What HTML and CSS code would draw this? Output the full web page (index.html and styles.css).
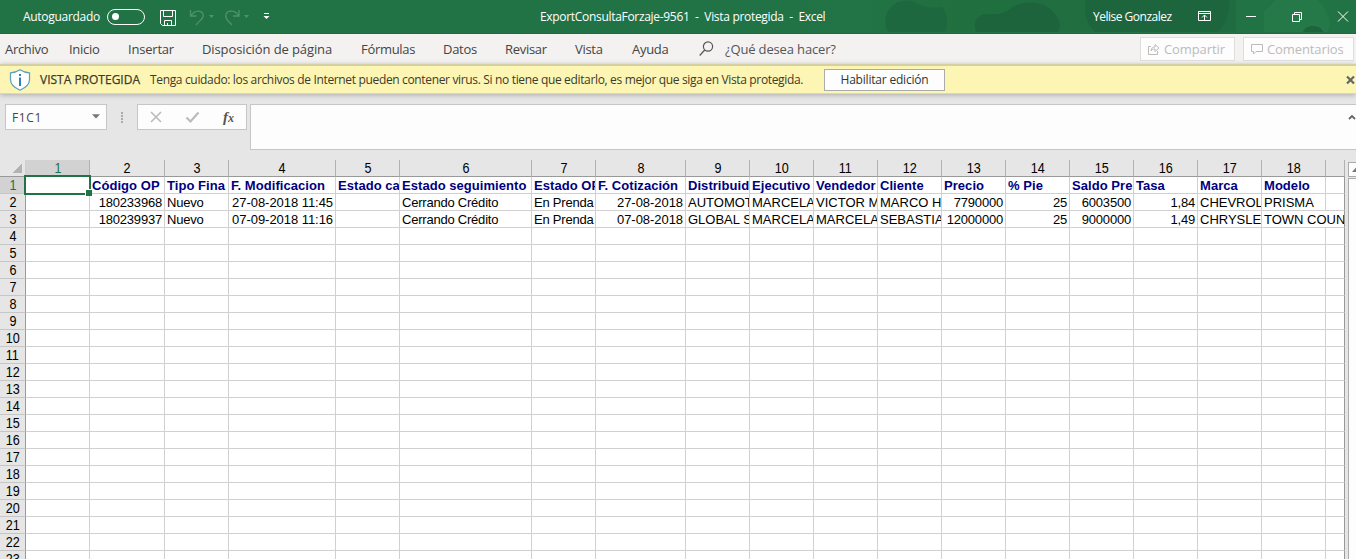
FILE: index.html
```html
<!DOCTYPE html>
<html lang="es">
<head>
<meta charset="utf-8">
<title>ExportConsultaForzaje-9561 - Excel</title>
<link rel="stylesheet" href="styles.css">
</head>
<body>
<div class="app">
  <header class="titlebar">
    <svg class="title-art" width="560" height="32" viewBox="0 0 560 32">
      <defs><linearGradient id="fade"><stop offset="0" stop-color="#247549" stop-opacity="0"/><stop offset=".3" stop-color="#21703f"/><stop offset="1" stop-color="#206c42"/></linearGradient></defs>
      <rect width="440" height="32" fill="url(#fade)"/>
      <path d="M92 32a21 21 0 0 1 28-29c8 5 18 5 26 4 6 6 6 18 3 25z" fill="#1e683f"/>
      <path d="M180 32c-3-10 0-17 10-18 10 1 17 0 23-4 8-9 32-11 42 0 8 7 11 15 7 22z" fill="#1d643c"/>
      <path d="M290 0h144c-1 13-4 24-12 32H299c-9-9-12-20-9-32z" fill="#1d653d"/>
      <path d="M468 32V12L480 0h42c9 10 14 20 10 32z" fill="#257949"/>
      <path d="M507 32c2-8 18-8 20 0z" fill="#1c643b"/>
    </svg>
    <span class="autosave">Autoguardado</span>
    <span class="toggle"><i></i></span>
    <svg class="ico save" width="16" height="17" viewBox="0 0 16 17"><path d="M.5.5h15v15h-13l-2-2zM3.500.5v6h9v-6M4.500 15.500v-5h7v5M7.500 13v2" fill="none" stroke="#fff"/></svg>
    <svg class="ico undo" width="80" height="18" viewBox="0 0 80 18"><g fill="none" stroke="#4e9269" stroke-width="1.300"><path d="M1.500 1v6h6M2 6.500C6 1 12 1 14 5c1.500 4-3 6-7 11"/><path d="M50 1v6h-6M49.500 6.500C46 1 39 1 37 5c-1.500 4 2 7 6 11"/></g><path d="M20 6h5l-2.500 3zM55 6h5l-2.500 3z" fill="#4e9269"/></svg>
    <svg class="ico more" width="7" height="7" viewBox="0 0 7 7"><path d="M1 0h5v1H1zM.5 3h6l-3 3z" fill="#fff"/></svg>
    <span class="doc">ExportConsultaForzaje-9561&nbsp; -&nbsp; Vista protegida&nbsp; -&nbsp; Excel</span>
    <span class="user">Yelise Gonzalez</span>
    <svg class="ico winbtns" width="152" height="14" viewBox="0 0 152 14"><g fill="none" stroke="#fff"><path d="M.5 1.500h12v9H.5zM.5 3.500h12M6.500 10V5M4 7.500l2.500-2.500L9 7.500M48 6.500h10M94.500 4.500h7v7h-7zM96.500 4V2.500h7v7H102M140 1.500l10 10M150 1.500l-10 10"/></g></svg>
  </header>

  <nav class="tabs">
    <span>Archivo</span><span>Inicio</span><span class="insert">Insertar</span><span class="wide">Disposición de página</span><span>Fórmulas</span><span>Datos</span><span>Revisar</span><span>Vista</span><span>Ayuda</span>
    <svg width="15" height="16" viewBox="0 0 15 16"><g fill="none" stroke="#555" stroke-width="1.200"><circle cx="9" cy="5.500" r="4.600"/><path d="M5.700 9L.7 14.500"/></g></svg>
    <span class="ask">¿Qué desea hacer?</span>
    <div class="share"><svg width="12" height="12" viewBox="0 0 12 12"><path d="M3 3.500H.5v8h9V8M3 8c0-3 2-4 4-4V1.500l4 3.500-4 3.500V6C5 6 4 6.500 3 8z" fill="none" stroke="#bbb"/></svg><b>Compartir</b></div>
    <div class="share comments"><svg width="12" height="12" viewBox="0 0 12 12"><path d="M.5 1.500h11v7H5L2.500 11V8.500h-2z" fill="none" stroke="#bbb"/></svg><b>Comentarios</b></div>
  </nav>

  <section class="notice">
    <svg width="22" height="22" viewBox="0 0 22 22"><path d="M11 .8c3 2 6 3 9.500 3v7c0 5-4 8-9.500 10.400C5.500 18.800 1.500 15.800 1.500 10.800v-7c3.500 0 6.500-1 9.500-3z" fill="#fff" stroke="#5a9fbd" stroke-width="1.200"/><path d="M10 5h2v2h-2zM10 8.500h2V17h-2z" fill="#2d83b5"/></svg>
    <strong>VISTA PROTEGIDA</strong>
    <span class="msg">Tenga cuidado: los archivos de Internet pueden contener virus. Si no tiene que editarlo, es mejor que siga en Vista protegida.</span>
    <button><span>Habilitar edición</span></button>
    <svg class="dismiss" width="9" height="8" viewBox="0 0 9 8"><path d="M1 .5l7 7M8 .5l-7 7" stroke="#666" stroke-width="2.200"/></svg>
  </section>

  <section class="formula">
    <div class="namebox"><span>F1C1</span><svg width="8" height="5" viewBox="0 0 8 5"><path d="M0 .3h8L4 4.500z" fill="#777"/></svg></div>
    <div class="dots"><i></i><i></i><i></i><i></i></div>
    <div class="fxbox">
      <svg width="82" height="14" viewBox="0 0 82 14"><path d="M1 2l10 10M11 2L1 12" stroke="#bbb" stroke-width="1.600"/><path d="M36.500 7.500l4 4 8-9" fill="none" stroke="#bbb" stroke-width="2.200"/></svg>
      <em>f<small>x</small></em>
    </div>
    <div class="input"><svg width="8" height="6" viewBox="0 0 8 6"><path d="M1 5l3-3 3 3" fill="none" stroke="#666" stroke-width="1.800"/></svg></div>
  </section>

  <main class="sheet">
    <div class="grid" id="grid"></div>
    <div class="scroll"><div class="up"><svg width="8" height="5" viewBox="0 0 8 5"><path d="M0 5l4-4.500L8 5z" fill="#777"/></svg></div><div class="track"></div></div>
  </main>
</div>
<script src="grid.js"></script>
</body>
</html>
```
FILE: grid.js
```js
const rows = [
  ["", "Código OP", "Tipo Fina", "F. Modificacion", "Estado ca", "Estado seguimiento", "Estado OP", "F. Cotización", "Distribuid", "Ejecutivo", "Vendedor", "Cliente", "Precio", "% Pie", "Saldo Pre", "Tasa", "Marca", "Modelo", ""],
  ["", "180233968", "Nuevo", "27-08-2018 11:45", "", "Cerrando Crédito", "En Prenda", "27-08-2018", "AUTOMOT", "MARCELA", "VICTOR M", "MARCO H", "7790000", "25", "6003500", "1,84", "CHEVROL", "PRISMA", ""],
  ["", "180239937", "Nuevo", "07-09-2018 11:16", "", "Cerrando Crédito", "En Prenda", "07-08-2018", "GLOBAL S", "MARCELA", "MARCELA", "SEBASTIA", "12000000", "25", "9000000", "1,49", "CHRYSLE", "TOWN COUN"]
];
const grid = document.getElementById("grid");
function add(cls, text) {
  const cell = document.createElement("div");
  cell.className = cls;
  if (text) {
    const s = document.createElement("span");
    s.textContent = text;
    cell.append(s);
  }
  grid.append(cell);
}
add("corner", "");
for (let c = 1; c <= 19; c++) add("colhead" + (c === 1 ? " active" : ""), c < 19 ? String(c) : "");
for (let r = 1; r <= 23; r++) {
  add("rowhead" + (r === 1 ? " active" : ""), String(r));
  const data = rows[r - 1] || [];
  for (let c = 0; c < 19; c++) {
    if (r === 3 && c === 18) continue;
    const text = data[c] || "";
    let cls = "cell";
    if (r === 1) cls += " head";
    else if (/^\d+-/.test(text)) cls += " num date";
    else if (/^[\d,]+$/.test(text)) cls += " num";
    else if (/[a-z]/.test(text)) cls += " mixed";
    if (r === 1 && c === 0) cls += " selected";
    if (r === 3 && c === 17) cls += " span2";
    if (c === 18) cls += " last";
    add(cls, text);
  }
}
```
FILE: styles.css
```css
* { box-sizing: border-box; }
body { margin: 0; overflow: hidden; background: #e6e6e6; }
.app { width: 1356px; height: 559px; overflow: hidden; display: flex; flex-direction: column; font-family: "Open Sans", "Noto Sans", sans-serif; font-size: 12px; color: #444; white-space: nowrap; }
svg { display: block; flex: none; }

.titlebar { position: relative; height: 34px; flex: none; background: #217346; color: #fff; display: grid; grid-template-columns: 84px 53px 29px 74px 277px 553px 105px 1fr; padding-left: 23px; align-items: center; border-bottom: 1px solid #1e6b40; }
.titlebar > * { position: relative; }
.titlebar .title-art { position: absolute; right: 0; top: 0; }
.autosave { letter-spacing: -0.3px; }
.toggle { width: 38px; height: 16px; border: 1px solid #fff; border-radius: 8px; display: flex; align-items: center; padding-left: 4px; }
.toggle i { width: 7px; height: 7px; border-radius: 50%; background: #fff; }
.save { margin-top: 3px; }
.undo { margin-top: 2px; }
.doc { letter-spacing: -0.31px; }
.user { letter-spacing: -0.5px; }

.tabs { height: 30px; flex: none; background: #f3f2f1; display: grid; grid-template-columns: 64px 59px 74px 159px 82px 62px 70px 57px 67px 26px 415px 103px 104px; padding-left: 5px; align-items: center; font-size: 13px; letter-spacing: -0.3px; }
.tabs .wide { letter-spacing: -0.1px; }
.tabs .insert { letter-spacing: -0.2px; }
.tabs .ask { color: #555; letter-spacing: -0.15px; }
.share { height: 24px; width: 95px; border: 1px solid #dedede; background: #fdfdfd; color: #bbb; display: flex; align-items: center; gap: 4px; padding-left: 7px; letter-spacing: -0.1px; }
.share b { font-weight: 400; }
.share.comments { width: 111px; }

.notice { position: relative; height: 30px; flex: none; background: #fcf5b3; border-top: 2px solid #d3d0a3; border-bottom: 1px solid #dcd9ad; box-shadow: 0 1px 5px #aaa; display: grid; grid-template-columns: 31px 110px 674px 522px 1fr; padding-left: 9px; align-items: center; color: #3c3b2c; }
.notice strong { font-weight: 400; -webkit-text-stroke: 0.25px #3c3b2c; letter-spacing: 0; }
.msg { letter-spacing: -0.342px; }
.notice button { width: 121px; height: 22px; padding: 0; background: #fdfdfd; border: 1px solid #ababab; font: inherit; color: #333; letter-spacing: -0.2px; }

.formula { height: 66px; flex: none; display: flex; align-items: flex-start; padding: 10px 0 0 5px; }
.namebox { width: 102px; height: 26px; background: #fdfdfd; border: 1px solid #c6c6c6; display: flex; align-items: center; justify-content: space-between; padding: 0 6px 2px; }
.namebox span { padding-top: 2px; letter-spacing: .6px; }
.dots { width: 30px; height: 26px; display: flex; flex-direction: column; align-items: center; justify-content: center; gap: 1px; }
.dots i { width: 2px; height: 2px; background: #aaa; }
.fxbox { width: 110px; height: 26px; background: #fdfdfd; border: 1px solid #c6c6c6; display: flex; align-items: center; padding-left: 12px; margin-right: 3px; }
.fxbox svg { margin-right: -9px; }
.fxbox em { font: italic bold 15px "Liberation Serif", serif; color: #555; }
.fxbox small { font-size: 12px; }
.input { flex: 1; height: 46px; background: #fdfdfd; border: 1px solid #c6c6c6; border-right: 0; display: flex; justify-content: flex-end; padding-top: 9px; }

.sheet { flex: 1; display: flex; align-items: flex-start; min-height: 0; }
.grid { width: 1345px; display: grid; grid-template-columns: 26px 64px 75px 64px 107px 64px 132px 64px 90px repeat(10, 64px) 19px; grid-auto-rows: 17px; font: 13px/18px "Liberation Sans", Arial, sans-serif; color: #000; }
.corner { border-right: 1px solid #cfcfcf; border-bottom: 1px solid #999; background: linear-gradient(135deg, transparent 50%, #b3b3b3 50%) 13px 4px / 9px 9px no-repeat; }
.colhead { font-size: 14px; text-align: center; border-right: 1px solid #b1b1b1; border-bottom: 1px solid #999; line-height: 17px; }
.rowhead { font-size: 14px; text-align: center; border-right: 1px solid #999; border-bottom: 1px solid #c6c6c6; line-height: 17px; }
.colhead span, .rowhead span { display: inline-block; transform: scaleX(.9); }
.colhead.active, .rowhead.active { background: #d2d2d2; color: #217346; }
.cell { background: #fff; border-right: 1px solid #d0d0d0; border-bottom: 1px solid #d0d0d0; padding: 0 0 0 2px; line-height: 18px; overflow: hidden; min-width: 0; }
.cell.head { color: #000080; font-weight: bold; letter-spacing: .05px; }
.cell.num { text-align: right; padding-right: 2px; letter-spacing: -0.2px; }
.cell.date { letter-spacing: -0.05px; }
.cell.mixed { letter-spacing: -0.22px; }
.cell.last { border-right-color: #999; }
.cell.span2 { grid-column: span 2; border-right-color: #999; }
.cell.selected { position: relative; overflow: visible; z-index: 1; }
.cell.selected::before { content: ""; position: absolute; inset: -2px -2px -2px -2px; border: 2px solid #217346; }
.cell.selected::after { content: ""; position: absolute; right: -3px; bottom: -3px; width: 6px; height: 6px; background: #217346; border: 1px solid #fff; border-right: 0; border-bottom: 0; }
.scroll { flex: 1; height: 400px; padding: 2px 0 0 3px; }
.up { height: 15px; border: 1px solid #ababab; border-right: 0; background: #fdfdfd; display: flex; align-items: center; padding-left: 3px; overflow: hidden; }
.track { height: 390px; margin-top: 1px; border: 1px solid #ababab; border-right: 0; background: #fdfdfd; }
```
